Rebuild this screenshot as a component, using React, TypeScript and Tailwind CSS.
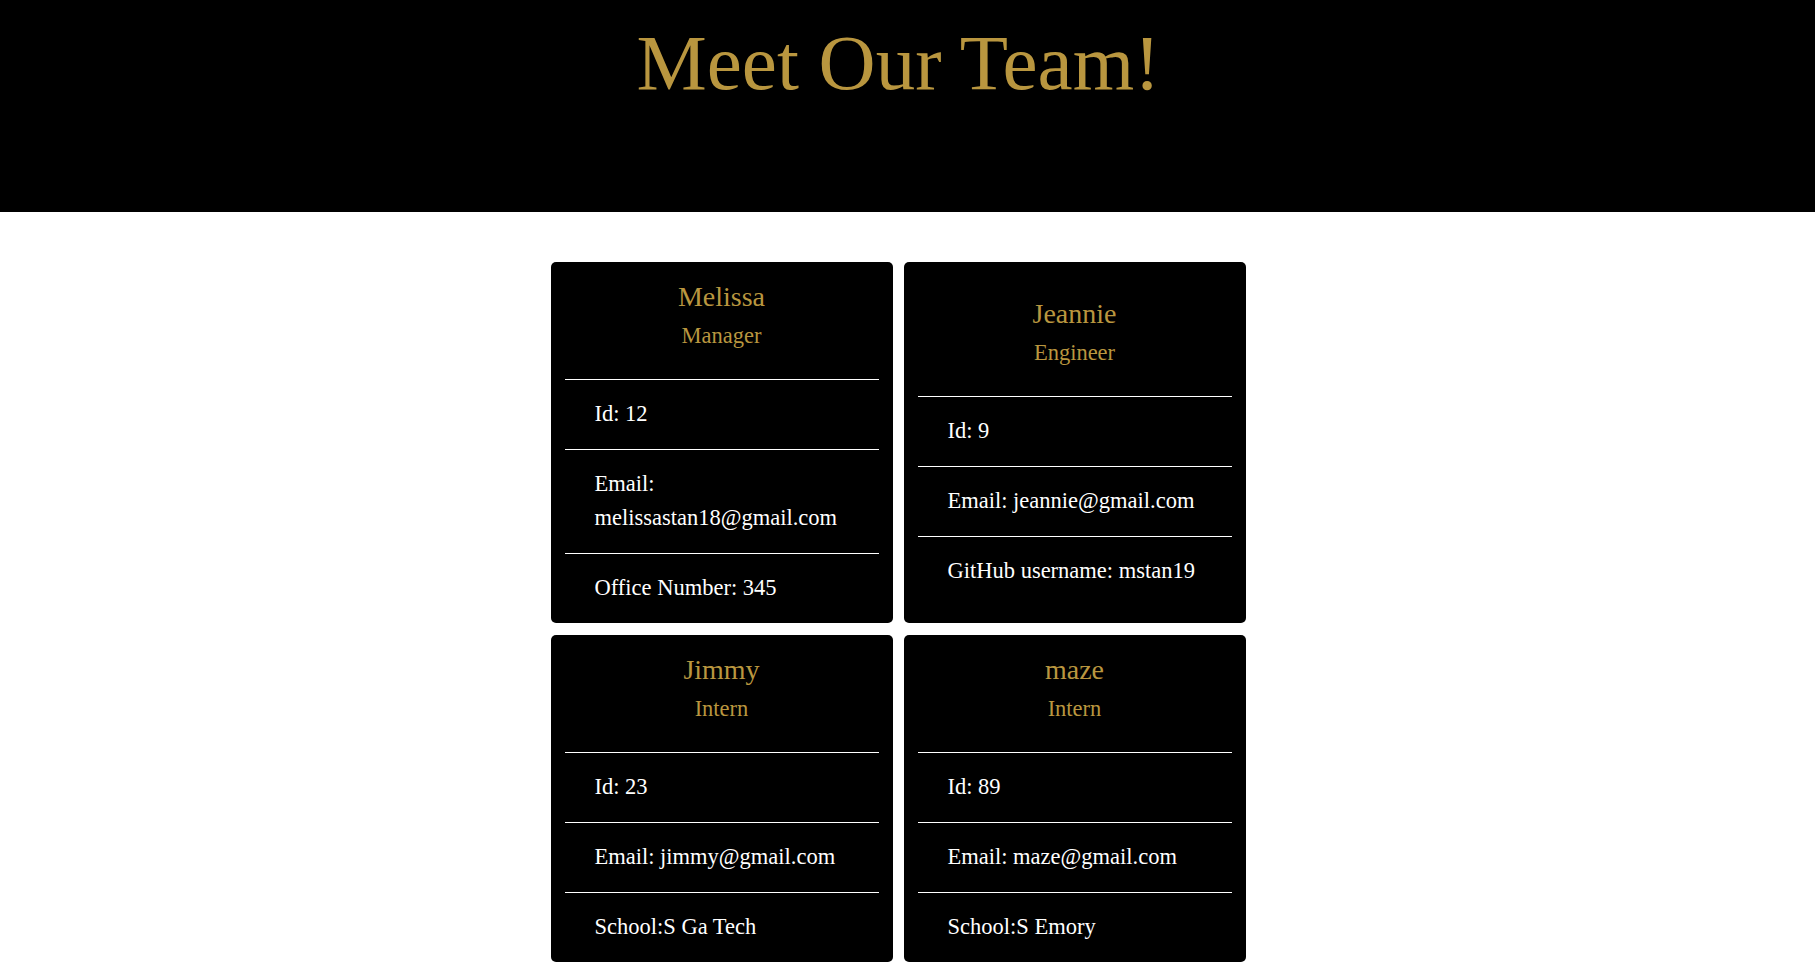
import React from "react";

type Member = {
  name: string;
  role: string;
  items: string[];
};

const members: Member[] = [
  {
    name: "Melissa",
    role: "Manager",
    items: ["Id: 12", "Email: melissastan18@gmail.com", "Office Number: 345"],
  },
  {
    name: "Jeannie",
    role: "Engineer",
    items: ["Id: 9", "Email: jeannie@gmail.com", "GitHub username: mstan19"],
  },
  {
    name: "Jimmy",
    role: "Intern",
    items: ["Id: 23", "Email: jimmy@gmail.com", "School:S Ga Tech"],
  },
  {
    name: "maze",
    role: "Intern",
    items: ["Id: 89", "Email: maze@gmail.com", "School:S Emory"],
  },
];

function Card({ m }: { m: Member }) {
  return (
    <div className="flex flex-col justify-center rounded-[5px] bg-black px-[14px] pt-[14px]">
      <div className="pb-[26px] text-center text-[#b9963f]">
        <div className="text-[28px] leading-[42px]">{m.name}</div>
        <div className="pt-[1px] text-[22.5px] leading-[33.6px]">{m.role}</div>
      </div>
      <ul>
        {m.items.map((it) => (
          <li
            key={it}
            className="border-t border-white py-[17.25px] pl-[30px] pr-[10px] text-[22.5px] leading-[34.5px] text-white"
          >
            {it}
          </li>
        ))}
      </ul>
    </div>
  );
}

export default function App() {
  return (
    <div className="min-h-screen bg-white font-['Liberation_Serif','Times_New_Roman',serif]">
      <header className="h-[212px] bg-black">
        <h1 className="pr-[18px] pt-[19px] text-center text-[79px] font-normal leading-[88px] text-[#b9963f]">
          Meet Our Team!
        </h1>
      </header>
      <main className="flex justify-center pr-[19px] pt-[50px]">
        <div className="grid grid-cols-[342px_342px] gap-x-[11px] gap-y-[12px]">
          {members.map((m) => (
            <Card key={m.name} m={m} />
          ))}
        </div>
      </main>
    </div>
  );
}
